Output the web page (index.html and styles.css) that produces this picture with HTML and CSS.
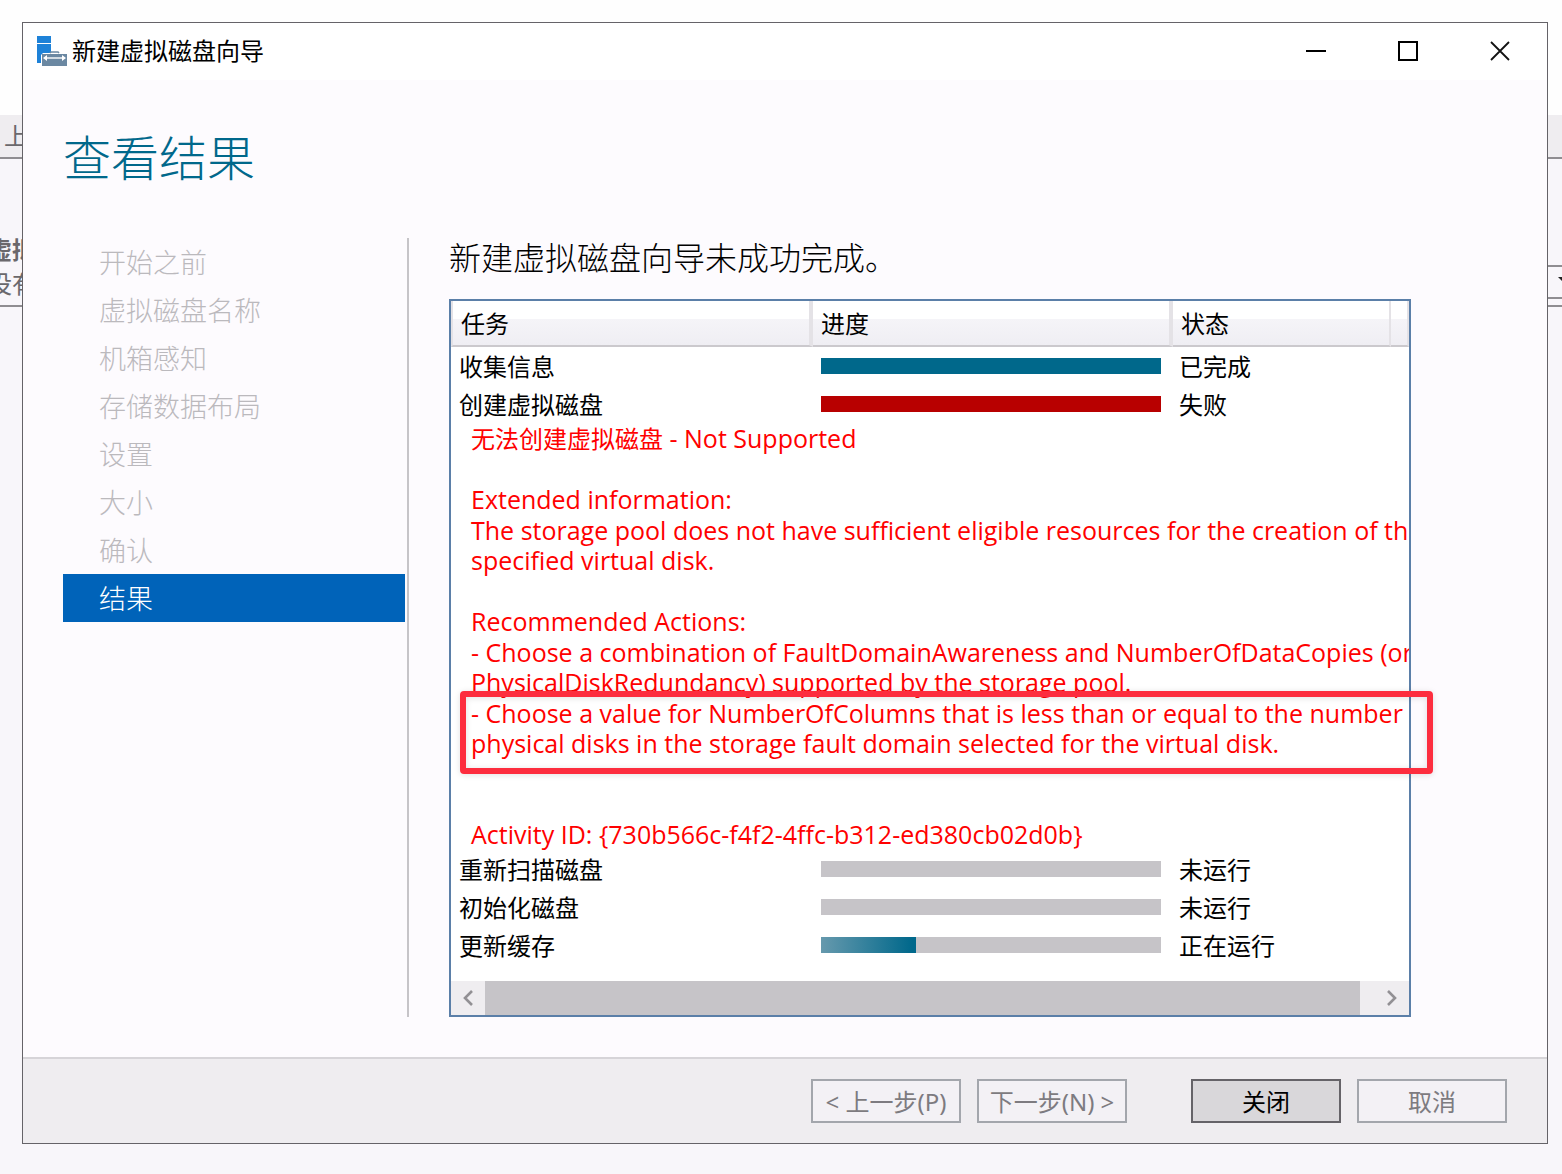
FILE: index.html
```
<!DOCTYPE html>
<html lang="zh-CN">
<head>
    <meta charset="utf-8">
    <title>新建虚拟磁盘向导</title>
    <link rel="stylesheet" href="styles.css">
</head>
<body>
    <!-- 后面的服务器管理器窗口 -->
    <div class="backdrop" aria-hidden="true">
        <div class="back-top"></div>
        <div class="back-bar">上</div>
        <div class="back-panel">
            <div class="back-text">
                <b>虚拟</b>
                <span>没有</span>
            </div>
            <div class="back-filter">
                <svg width="12" height="6" viewBox="0 0 12 6"><path d="M0 0h12L6 6z" fill="#222"/></svg>
            </div>
        </div>
    </div>

    <div class="window">
        <header class="titlebar">
            <svg class="logo" width="31" height="31" viewBox="0 0 31 31">
                <path d="M0 0h14v7H0zM0 8h14v9H6l-2 2v8H0z" fill="#1e82d8"/>
                <path d="M5 18h25v12H5z" fill="#6b88a2"/>
                <path d="M13 17l1-1h7l1 1" fill="none" stroke="#6b88a2" stroke-width="1.6"/>
                <path d="M8 22h19" stroke="#fff" stroke-width="1.4"/>
                <path d="M10 19v6l-4-3zM25 19v6l4-3z" fill="#fff"/>
            </svg>
            <span class="caption">新建虚拟磁盘向导</span>
            <button class="sys" aria-label="最小化">
                <svg width="20" height="20" viewBox="0 0 20 20"><path d="M0 10h20" stroke="#000" stroke-width="2"/></svg>
            </button>
            <button class="sys" aria-label="最大化">
                <svg width="20" height="20" viewBox="0 0 20 20"><path d="M1 1h18v18H1z" fill="none" stroke="#000" stroke-width="2"/></svg>
            </button>
            <button class="sys" aria-label="关闭窗口">
                <svg width="20" height="20" viewBox="0 0 20 20"><path d="M1 1l18 18M19 1L1 19" stroke="#111" stroke-width="1.8"/></svg>
            </button>
        </header>

        <h1>查看结果</h1>

        <main class="main">
            <nav>
                <ul class="steps">
                    <li>开始之前</li>
                    <li>虚拟磁盘名称</li>
                    <li>机箱感知</li>
                    <li>存储数据布局</li>
                    <li>设置</li>
                    <li>大小</li>
                    <li>确认</li>
                    <li class="on">结果</li>
                </ul>
            </nav>
            <section class="result">
                <h2>新建虚拟磁盘向导未成功完成。</h2>
                <div class="tasks">
                    <div class="view">
                        <table>
                            <colgroup>
                                <col class="c-task">
                                <col class="c-bar">
                                <col>
                                <col class="c-end">
                            </colgroup>
                            <thead>
                                <tr><th>任务</th><th>进度</th><th>状态</th><th></th></tr>
                            </thead>
                            <tbody>
                                <tr><td>收集信息</td><td><div class="bar done"></div></td><td>已完成</td><td></td></tr>
                                <tr><td>创建虚拟磁盘</td><td><div class="bar fail"></div></td><td>失败</td><td></td></tr>
                                <tr>
                                    <td class="detail" colspan="4">
                                        <p><span class="cn">无法创建虚拟磁盘</span> - Not Supported</p>
                                        <p class="para">Extended information:</p>
                                        <p>The storage pool does not have sufficient eligible resources for the creation of the<br>specified virtual disk.</p>
                                        <p class="para">Recommended Actions:</p>
                                        <p>- Choose a combination of FaultDomainAwareness and NumberOfDataCopies (or<br>PhysicalDiskRedundancy) supported by the storage pool.</p>
                                        <p>- Choose a value for NumberOfColumns that is less than or equal to the number of<br>physical disks in the storage fault domain selected for the virtual disk.</p>
                                        <p class="last">Activity ID: {730b566c-f4f2-4ffc-b312-ed380cb02d0b}</p>
                                    </td>
                                </tr>
                                <tr><td>重新扫描磁盘</td><td><div class="bar"></div></td><td>未运行</td><td></td></tr>
                                <tr><td>初始化磁盘</td><td><div class="bar"></div></td><td>未运行</td><td></td></tr>
                                <tr><td>更新缓存</td><td><div class="bar"><div class="run" style="width:28%"></div></div></td><td>正在运行</td><td></td></tr>
                            </tbody>
                        </table>
                        <div class="scroll">
                            <button aria-label="向左滚动"><svg width="12" height="16" viewBox="0 0 12 16"><path d="M10 1L3 8l7 7" fill="none" stroke="#929094" stroke-width="2.6"/></svg></button>
                            <div class="thumb"></div>
                            <button aria-label="向右滚动"><svg width="12" height="16" viewBox="0 0 12 16"><path d="M2 1l7 7-7 7" fill="none" stroke="#929094" stroke-width="2.6"/></svg></button>
                        </div>
                    </div>
                    <div class="mark"></div>
                </div>
            </section>
        </main>

        <footer class="buttons">
            <button disabled>&lt; 上一步(P)</button>
            <button disabled>下一步(N) &gt;</button>
            <button class="close">关闭</button>
            <button disabled>取消</button>
        </footer>
    </div>
</body>
</html>
```
FILE: styles.css
```
*{margin:0;padding:0;box-sizing:border-box;}
body{min-height:100vh;display:flex;position:relative;overflow-x:hidden;background:#f8f6fa;
    font:24px/30px "Noto Sans","Noto Sans CJK SC",sans-serif;color:#000;}
button{font:inherit;background:none;border:0;}
svg{display:block;}

/* 背景窗口 */
.backdrop{position:absolute;top:0;left:0;width:100%;color:#6a686c;overflow:hidden;}
.back-top{height:115px;background:#fefefe;}
.back-bar{height:44px;padding:6px 4px;background:#efedf0;border-bottom:2px solid #8f8d91;}
.back-panel{height:148px;display:flex;justify-content:space-between;align-items:flex-end;
    border-bottom:2px solid #8f8d91;}
.back-text{margin-left:-12px;padding-bottom:4px;}
.back-text b,.back-text span{display:block;height:34px;line-height:34px;}
.back-filter{width:200px;height:34px;margin-bottom:6px;padding:10px 0;display:flex;justify-content:flex-end;
    border:2px solid #8f8d91;border-width:2px 0;}
.back-filter svg{margin-right:-8px;}

/* 向导窗口 */
.window{position:relative;flex:1;display:flex;flex-direction:column;margin:22px 14px 30px 22px;
    background:#fdfbfe;border:1px solid #656368;}
.titlebar{height:57px;display:flex;align-items:center;padding:0 1px 0 14px;background:#fff;}
.caption{flex:1;margin-left:4px;padding-bottom:2px;}
.sys{width:92px;height:56px;padding-bottom:2px;display:flex;align-items:center;justify-content:center;}
h1{margin:48px 40px 0;font-size:48px;line-height:60px;font-weight:300;color:#00688b;}
.main{flex:1;display:flex;padding:50px 136px 40px 40px;}
nav{width:346px;border-right:2px solid #c6c4c8;}
.steps{width:342px;list-style:none;font-size:27px;line-height:48px;font-weight:300;color:#bbb9bd;}
.steps li{height:48px;padding:1px 0 0 36px;}
.steps .on{background:#0063b9;color:#fff;}
.result{flex:1;min-width:0;margin-left:40px;display:flex;flex-direction:column;}
h2{font-size:32px;line-height:40px;font-weight:300;margin-bottom:21px;}

/* 任务列表 */
.tasks{position:relative;flex:1;}
.view{height:100%;overflow:hidden;display:flex;flex-direction:column;border:2px solid #5b7fa8;background:#fff;}
table{width:100%;table-layout:fixed;border-collapse:separate;border-spacing:0;}
.c-task{width:362px;}
.c-bar{width:360px;}
.c-end{width:18px;}
th{height:46px;padding:2px 8px 0;text-align:left;font-weight:400;border-right:4px solid #e4e2e6;border-bottom:2px solid #cbc9cd;
    background:linear-gradient(#fff 40%,#f5f4f8 41%,#efeef3);}
th:first-child{padding-left:8px;border-left:2px solid #e4e2e6;}
th:nth-child(3),th:last-child{border-right-width:2px;}
th:last-child{padding:0;}
td{height:38px;padding:2px 8px 0;white-space:nowrap;}
td:nth-child(2){padding:0 12px 0 8px;}
td:nth-child(3){padding-left:6px;}
td:last-child{padding:0;}
.bar{height:16px;background:#c6c4c8;}
.done{background:#00688b;}
.fail{background:#b80000;}
.run{height:16px;background:linear-gradient(to right,#6699ad,#00688b 96%);}
td.detail:last-child{padding:0 0 0 20px;font-family:"Open Sans","Noto Sans CJK SC",sans-serif;font-size:25px;color:#f00;}
.detail .cn{font-size:24px;line-height:24px;}
.detail p{margin-bottom:1px;}
.detail .para{padding-top:30px;}
.detail .last{padding-top:60px;}
.scroll{height:34px;margin-top:auto;display:flex;background:#efedf0;}
.scroll button{width:34px;display:flex;align-items:center;justify-content:center;}
.thumb{flex:1;margin-right:15px;background:#c6c4c8;}

/* 红框标注 */
.mark{position:absolute;top:392px;left:11px;right:-22px;height:83px;border:6px solid #fd2d3e;border-radius:4px;
    box-shadow:0 1px 6px rgba(0,0,0,.12),inset 0 1px 6px rgba(0,0,0,.12);}

.buttons{height:86px;display:flex;justify-content:flex-end;gap:16px;padding:20px 40px;background:#efedf0;
    border-top:2px solid #d6d4d8;}
.buttons button{width:150px;height:44px;padding-top:2px;white-space:nowrap;border:2px solid #a3a6ac;background:#f3f1f5;color:#7d7b80;}
.buttons .close{margin-left:48px;border-color:#656368;background:#d9d7da;color:#000;}
```
